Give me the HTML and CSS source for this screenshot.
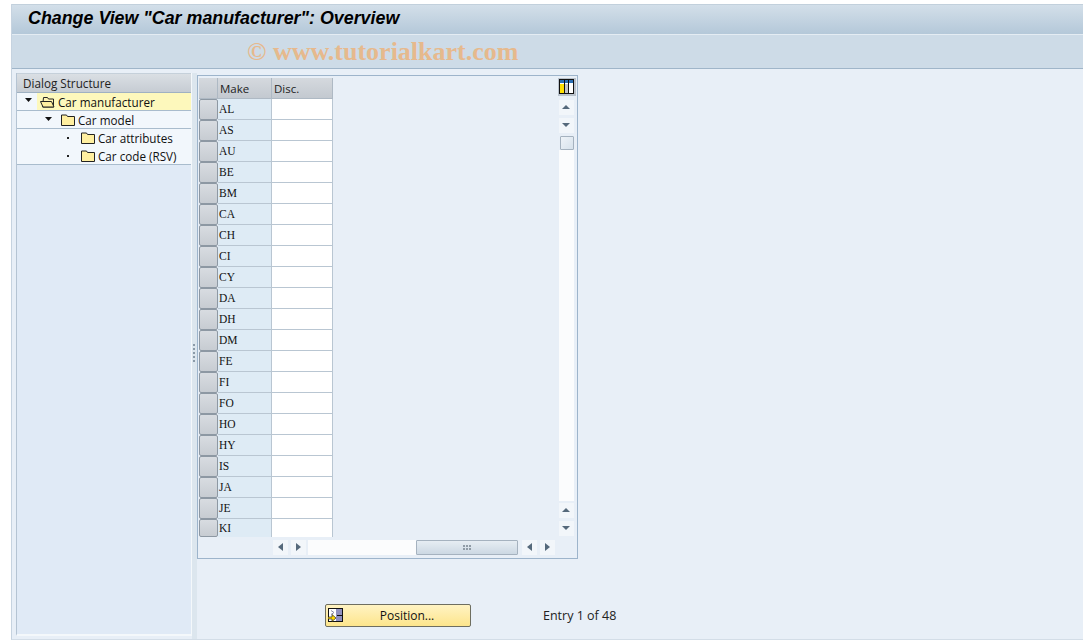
FILE: index.html
```html
<!DOCTYPE html>
<html lang="en">
<head>
<meta charset="utf-8">
<title>Change View "Car manufacturer": Overview</title>
<link rel="stylesheet" href="styles.css">
</head>
<body>
<div class="window">
  <header class="titlebar"><h1>Change View "Car manufacturer": Overview</h1></header>
  <div class="toolbar"><span class="watermark">© www.tutorialkart.com</span></div>
  <div class="main">
    <aside class="tree">
      <div class="tree-head">Dialog Structure</div>
      <div class="node n0">
        <svg class="tri" width="7" height="4" viewBox="0 0 7 4"><path d="M0 0h7L3.500 4z" fill="#111"/></svg>
        <span class="sel">
          <svg class="folder" width="15" height="12" viewBox="0 0 15 12"><path d="M3.500 1.500h4l1 1.500h5v8h-11z" fill="#fff3b0" stroke="#222"/><path d="M.5 5.500h11l2.500 5.500h-11z" fill="#ffefa0" stroke="#222"/></svg>
          Car manufacturer
        </span>
      </div>
      <div class="node n1">
        <svg class="tri" width="7" height="4" viewBox="0 0 7 4"><path d="M0 0h7L3.500 4z" fill="#111"/></svg>
        <svg class="folder" width="14" height="12" viewBox="0 0 14 12"><path d="M.5 11.500v-10.500h5l1 1.500h7v9z" fill="#ffefa0" stroke="#222"/></svg>
        Car model
      </div>
      <div class="node n2">
        <i class="dot"></i>
        <svg class="folder" width="14" height="12" viewBox="0 0 14 12"><path d="M.5 11.500v-10.500h5l1 1.500h7v9z" fill="#ffefa0" stroke="#222"/></svg>
        Car attributes
      </div>
      <div class="node n2 last">
        <i class="dot"></i>
        <svg class="folder" width="14" height="12" viewBox="0 0 14 12"><path d="M.5 11.500v-10.500h5l1 1.500h7v9z" fill="#ffefa0" stroke="#222"/></svg>
        Car code (RSV)
      </div>
    </aside>
    <div class="sash"><i></i><i></i><i></i><i></i><i></i></div>
    <section class="content">
      <div class="tablebox">
        <div class="tablewrap">
          <div class="grid">
            <div class="corner"></div><div class="th">Make</div><div class="th">Disc.</div>
            <div class="sel-btn"></div><div class="key">AL</div><div class="val"></div>
            <div class="sel-btn"></div><div class="key">AS</div><div class="val"></div>
            <div class="sel-btn"></div><div class="key">AU</div><div class="val"></div>
            <div class="sel-btn"></div><div class="key">BE</div><div class="val"></div>
            <div class="sel-btn"></div><div class="key">BM</div><div class="val"></div>
            <div class="sel-btn"></div><div class="key">CA</div><div class="val"></div>
            <div class="sel-btn"></div><div class="key">CH</div><div class="val"></div>
            <div class="sel-btn"></div><div class="key">CI</div><div class="val"></div>
            <div class="sel-btn"></div><div class="key">CY</div><div class="val"></div>
            <div class="sel-btn"></div><div class="key">DA</div><div class="val"></div>
            <div class="sel-btn"></div><div class="key">DH</div><div class="val"></div>
            <div class="sel-btn"></div><div class="key">DM</div><div class="val"></div>
            <div class="sel-btn"></div><div class="key">FE</div><div class="val"></div>
            <div class="sel-btn"></div><div class="key">FI</div><div class="val"></div>
            <div class="sel-btn"></div><div class="key">FO</div><div class="val"></div>
            <div class="sel-btn"></div><div class="key">HO</div><div class="val"></div>
            <div class="sel-btn"></div><div class="key">HY</div><div class="val"></div>
            <div class="sel-btn"></div><div class="key">IS</div><div class="val"></div>
            <div class="sel-btn"></div><div class="key">JA</div><div class="val"></div>
            <div class="sel-btn"></div><div class="key">JE</div><div class="val"></div>
            <div class="sel-btn lastrow"></div><div class="key lastrow">KI</div><div class="val lastrow"></div>
          </div>
          <div class="vbar">
            <svg class="config" width="18" height="18" viewBox="0 0 18 18"><rect width="18" height="18" fill="#b9c2cc"/><rect x="1" y="1" width="15" height="15" fill="#111"/><rect x="2" y="2" width="13" height="13" fill="#fff"/><rect x="2" y="2" width="13" height="3" fill="#2a6fb5"/><rect x="2" y="6" width="4" height="9" fill="#ffdf00"/><rect x="7" y="6" width="3" height="9" fill="#c4c4c4"/><rect x="6" y="2" width="1" height="13" fill="#111"/><rect x="10" y="2" width="1" height="13" fill="#111"/></svg>
            <div class="sbtn up"></div>
            <div class="sbtn down"></div>
            <div class="vthumb"></div>
            <div class="vtrack"></div>
            <div class="sbtn up"></div>
            <div class="sbtn down"></div>
          </div>
        </div>
        <div class="hbar">
          <div class="sbtn left"></div>
          <div class="sbtn right"></div>
          <div class="htrack"></div>
          <div class="hthumb"><span class="grip"></span></div>
          <div class="sbtn left"></div>
          <div class="sbtn right"></div>
        </div>
      </div>
      <div class="actions">
        <button class="position" type="button">
          <svg class="pos-icon" width="16" height="15" viewBox="0 0 16 15"><rect x=".5" y=".5" width="14" height="13" fill="#fff" stroke="#111"/><rect x="8" y="1" width="6" height="12" fill="#8f8fbf"/><path d="M9 7.500h5" stroke="#111"/><path d="M3 2.500l3 2-3 2" fill="none" stroke="#8a8aa8"/><path d="M0 9h4V6.500L8 10l-4 3.500V11H0z" fill="#ffd800" stroke="#222" stroke-width=".7"/></svg>
          <span>Position...</span>
        </button>
        <span class="entry">Entry 1 of 48</span>
      </div>
    </section>
  </div>
</div>
</body>
</html>
```

FILE: styles.css
```css
* { box-sizing: border-box; }
html, body { margin: 0; height: 100%; }
body {
  width: 1083px;
  height: 641px;
  overflow: hidden;
  padding: 4px 0 0 11px;
  background: #fff;
  font-family: "Open Sans", "Noto Sans", sans-serif;
  font-size: 12px;
  color: #111;
}
.window {
  height: 636px;
  display: flex;
  flex-direction: column;
  background: #e8eff7;
  border-left: 1px solid #c6d3e0;
  border-bottom: 1px solid #d3dde7;
}
.titlebar {
  height: 31px;
  background: linear-gradient(#d3dfe9, #b4c8d9);
  border-top: 1px solid #c2d0dc;
  border-bottom: 1px solid #e4ecf3;
  padding-left: 16px;
}
.titlebar h1 {
  margin: 0;
  font: italic bold 17.85px/27px "Liberation Sans", sans-serif;
  color: #000;
}
.toolbar {
  height: 34px;
  background: #cddbe7;
  border-bottom: 1px solid #9fb5c9;
  padding-left: 235px;
}
.watermark {
  font: bold 26px/34px "Liberation Serif", serif;
  color: #e6b98d;
}
.main { flex: 1; display: flex; min-height: 0; padding: 4px 0 0 1px; }
.tree {
  width: 176px;
  margin: 0 0 3px 3px;
  background: #e0eaf6;
  border-left: 1px solid #b5c4d3;
  border-right: 1px solid #f4f8fb;
  border-bottom: 2px solid #f4f8fb;
  font-size: 11.7px;
}
.tree-head {
  height: 20px;
  padding-left: 6px;
  line-height: 19px;
  background: linear-gradient(#dadfe4, #c6ccd3);
  border-bottom: 1px solid #9fb1c2;
  border-top: 1px solid #c5d0da;
  color: #222;
}
.node {
  height: 18px;
  display: flex;
  align-items: center;
  background: #f2f7fc;
  white-space: nowrap;
  line-height: 18px;
}
.n0 { padding-left: 8px; border-bottom: 1px solid #a9bccd; }
.n1 { padding: 1px 0 0 28px; border-bottom: 1px solid #a9bccd; }
.n2 { padding-left: 50px; }
.last { padding-top: 1px; border-bottom: 1px solid #a9bccd; }
.tri { margin-right: 9px; margin-top: -3px; flex: none; }
.n0 .tri { margin-right: 5px; }
.n0 .sel {
  flex: 1;
  height: 17px;
  background: #fdf8bc;
  display: flex;
  align-items: center;
  padding: 1px 0 0 3px;
}
.folder { margin-right: 3px; flex: none; }
.dot { width: 2px; height: 2px; background: #222; margin-right: 12px; margin-top: -1px; flex: none; }
.sash {
  width: 5px;
  background: #dce6ee;
  display: flex;
  flex-direction: column;
  justify-content: center;
  gap: 2px;
  padding: 0 1px 7px 0;
  align-items: center;
}
.sash i { width: 2px; height: 2px; background: #8b9aa8; }
.content {
  flex: 1;
  display: flex;
  flex-direction: column;
  align-items: flex-start;
}
.tablebox {
  width: 381px;
  height: 484px;
  margin-top: 2px;
  border: 1px solid #9db4cb;
  padding: 2px 1px 0 1px;
  display: flex;
  flex-direction: column;
}
.tablewrap { display: flex; justify-content: space-between; height: 459px; }
.grid {
  display: grid;
  grid-template-columns: 19px 54px 61px;
  grid-template-rows: repeat(21, 21px) 18px;
  height: 459px;
}
.corner, .th {
  background: linear-gradient(#d5d9de, #c3c9d0);
  border-right: 1px solid #aeb9c4;
  border-bottom: 1px solid #aeb9c4;
}
.th { padding-left: 2px; line-height: 21px; color: #222; font-size: 11.5px; }
.sel-btn {
  background: linear-gradient(#d8dce1, #c7ccd2);
  border: 1px solid #8d98a3;
  border-radius: 2px;
}
.key {
  background: #deebf5;
  border-right: 1px solid #b9c6d2;
  border-bottom: 1px solid #b9c6d2;
  font: 11.5px/20px "Liberation Serif", serif;
  padding-left: 1px;
  color: #111;
}
.val {
  background: #fff;
  border-right: 1px solid #b9c6d2;
  border-bottom: 1px solid #b9c6d2;
}
.key.lastrow, .val.lastrow { border-bottom: 0; line-height: 18px; }
.vbar { width: 18px; padding-bottom: 1px; display: flex; flex-direction: column; align-items: flex-start; }
.config { display: block; margin-bottom: 4px; }
.sbtn {
  flex: none;
  width: 15px;
  height: 15px;
  background: #f2f6fa;
  position: relative;
}
.vbar .sbtn { margin-left: 1px; }
.sbtn::after {
  content: "";
  position: absolute;
  left: 3px;
  top: 5px;
  border: 4px solid transparent;
  border-top-width: 0;
  border-bottom: 4px solid #55697b;
}
.sbtn.down { margin-top: 3px; }
.sbtn.down::after { border-bottom: 0; border-top: 4px solid #55697b; top: 5px; }
.sbtn.left::after { left: 5px; top: 3px; border: 4px solid transparent; border-left: 0; border-right: 5px solid #55697b; }
.sbtn.right::after { left: 5px; top: 3px; border: 4px solid transparent; border-right: 0; border-left: 5px solid #55697b; }
.vthumb {
  flex: none;
  width: 14px;
  height: 14px;
  margin: 3px 0 0 2px;
  background: linear-gradient(135deg, #eef3f8, #d7e2ec);
  border: 1px solid #a5b2bf;
  border-radius: 1px;
}
.vtrack { flex: 1; width: 15px; background: #fbfcfd; margin: 0 0 2px 1px; }
.hbar { height: 15px; margin-top: 3px; padding-left: 74px; display: flex; }
.hbar .sbtn.right { margin-left: 3px; }
.htrack { width: 108px; margin-left: 2px; background: #fbfcfd; }
.hthumb {
  width: 102px;
  background: linear-gradient(#e6edf3, #ccd8e3);
  border: 1px solid #a5b2bf;
  border-radius: 1px;
  margin-right: 4px;
  display: flex;
  align-items: center;
  justify-content: center;
}
.grip {
  width: 8px;
  height: 5px;
  background: radial-gradient(circle at 1px 1px, #8f9ba6 1px, transparent 1px) 0 0 / 3px 3px;
}
.actions {
  margin-top: 45px;
  padding-left: 128px;
  display: flex;
  align-items: center;
}
.position {
  width: 146px;
  height: 23px;
  padding: 0 0 0 2px;
  display: flex;
  align-items: center;
  background: linear-gradient(#fff3c3, #fde58c);
  border: 1px solid #6e6e60;
  border-radius: 2px;
  font: inherit;
  color: #111;
}
.pos-icon { flex: none; }
.position span { flex: 1; text-align: center; }
.entry { margin-left: 72px; color: #222; font-size: 12.5px; }
```
